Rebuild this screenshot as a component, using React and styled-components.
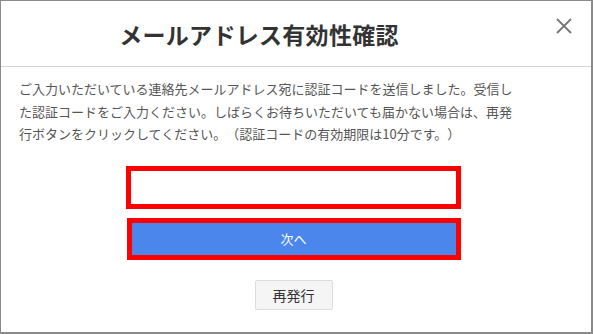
import React from 'react';
import styled, { createGlobalStyle } from 'styled-components';

const GlobalStyle = createGlobalStyle`
  html, body { margin: 0; padding: 0; background: #fff; }
  * { box-sizing: border-box; }
`;

const Modal = styled.div`
  width: 593px;
  height: 334px;
  border: 1px solid #8a8a8a;
  border-right-width: 2px;
  border-bottom-width: 2px;
  background: #fff;
  display: flex;
  flex-direction: column;
  font-family: "Noto Sans CJK JP", "Noto Sans", sans-serif;
  text-spacing-trim: space-all;
  position: relative;
`;

const Header = styled.div`
  height: 66px;
  border-bottom: 1px solid #d4d4d4;
  display: flex;
  align-items: center;
  justify-content: center;
  padding-right: 74px;
`;

const Title = styled.h1`
  margin: 0;
  font-size: 23px;
  font-weight: 700;
  color: #333;
  letter-spacing: 0.3px;
`;

const Close = styled.button`
  position: absolute;
  top: 15px;
  right: 17px;
  width: 20px;
  height: 20px;
  padding: 0;
  border: none;
  background: none;
  display: flex;
  align-items: center;
  justify-content: center;
  cursor: pointer;
`;

const Body = styled.div`
  padding: 11px 18px 0;
  display: flex;
  flex-direction: column;
`;

const Message = styled.p`
  margin: 0;
  width: 500px;
  font-size: 13px;
  line-height: 22.5px;
  color: #555;
`;

const Form = styled.div`
  margin-top: 20px;
  padding-right: 5px;
  display: flex;
  flex-direction: column;
  align-items: center;
  gap: 9px;
`;

const CodeInput = styled.input`
  width: 335px;
  height: 43px;
  border: 5px solid #f00;
  outline: none;
  font-size: 14px;
  padding: 0 8px;
`;

const NextButton = styled.button`
  width: 334px;
  height: 42px;
  border: 5px solid #f00;
  background: #4a86eb;
  color: #fff;
  font-family: inherit;
  font-size: 13px;
  cursor: pointer;
`;

const ResendButton = styled.button`
  margin-top: 11px;
  width: 78px;
  height: 30px;
  border: 1px solid #dcdcdc;
  border-radius: 2px;
  background: #f5f5f5;
  color: #333;
  font-family: inherit;
  font-size: 14px;
  cursor: pointer;
`;

export default function App() {
  return (
    <>
      <GlobalStyle />
      <Modal>
        <Header>
          <Title>メールアドレス有効性確認</Title>
        </Header>
        <Close aria-label="閉じる">
          <svg width="16" height="16" viewBox="0 0 16 16">
            <path d="M1 1L15 15M15 1L1 15" stroke="#777" strokeWidth="1.8" />
          </svg>
        </Close>
        <Body>
          <Message>
            ご入力いただいている連絡先メールアドレス宛に認証コードを送信しました。受信した認証コードをご入力ください。しばらくお待ちいただいても届かない場合は、再発行ボタンをクリックしてください。（認証コードの有効期限は10分です。）
          </Message>
          <Form>
            <CodeInput type="text" />
            <NextButton>次へ</NextButton>
            <ResendButton>再発行</ResendButton>
          </Form>
        </Body>
      </Modal>
    </>
  );
}
